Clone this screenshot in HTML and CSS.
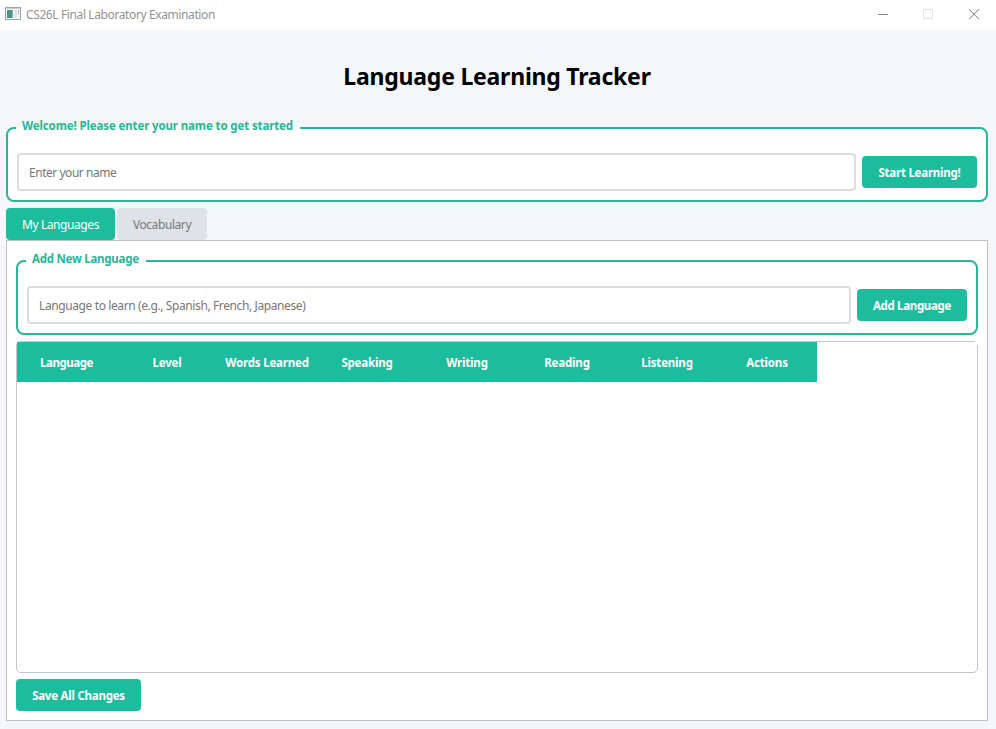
FILE: index.html
```html
<!DOCTYPE html>
<html lang="en">
<head>
<meta charset="utf-8">
<title>CS26L Final Laboratory Examination</title>
<link rel="stylesheet" href="styles.css">
</head>
<body>
<header class="titlebar">
  <svg class="app-icon" width="16" height="14" viewBox="0 0 16 14" shape-rendering="crispEdges">
    <rect x="0.5" y="0.5" width="15" height="12" fill="#f4f6f7" stroke="#9aa3a8"/>
    <rect x="1" y="1" width="14" height="1" fill="#c9d0d4"/>
    <rect x="2" y="3" width="5" height="8" fill="#4b9288"/>
    <rect x="7" y="3" width="1" height="8" fill="#8eaab5"/>
    <rect x="9" y="3" width="3" height="8" fill="#dfe4e7"/>
    <rect x="13" y="3" width="1" height="4" fill="#a8b4ba"/>
  </svg>
  <span class="window-title"><span class="t">CS26L Final Laboratory Examination</span></span>
  <div class="window-controls">
    <svg width="46" height="28" viewBox="0 0 46 28"><path d="M18 14.5h10" stroke="#8c8c8c" fill="none"/></svg>
    <svg width="46" height="28" viewBox="0 0 46 28"><rect x="17.5" y="9.5" width="9" height="9" stroke="#e4e4e4" fill="none"/></svg>
    <svg width="46" height="28" viewBox="0 0 46 28"><path d="M17 9.2l10 10M27 9.2l-10 10" stroke="#777" fill="none"/></svg>
  </div>
</header>
<main class="content">
  <h1><span class="t">Language Learning Tracker</span></h1>
  <section class="group">
    <div class="legend legend-welcome"><span class="t">Welcome! Please enter your name to get started</span></div>
    <div class="row">
      <div class="field field-name"><span class="t">Enter your name</span></div>
      <button class="btn btn-start"><span class="t">Start Learning!</span></button>
    </div>
  </section>
  <nav class="tabs">
    <div class="tab tab-languages active"><span class="t">My Languages</span></div>
    <div class="tab tab-vocabulary"><span class="t">Vocabulary</span></div>
  </nav>
  <section class="pane">
    <section class="group">
      <div class="legend legend-add"><span class="t">Add New Language</span></div>
      <div class="row">
        <div class="field"><span class="t">Language to learn (e.g., Spanish, French, Japanese)</span></div>
        <button class="btn btn-add"><span class="t">Add Language</span></button>
      </div>
    </section>
    <div class="table">
      <div class="table-head">
        <div class="tight">Language</div><div>Level</div><div>Words Learned</div><div>Speaking</div><div>Writing</div><div>Reading</div><div>Listening</div><div>Actions</div>
      </div>
    </div>
    <button class="btn btn-save"><span class="t">Save All Changes</span></button>
  </section>
</main>
</body>
</html>
```
FILE: styles.css
```css
* { box-sizing: border-box; }
body {
  margin: 0;
  width: 996px;
  height: 729px;
  overflow: hidden;
  background: #f5f6fa;
  font: 12px/16px "Noto Sans", "Open Sans", sans-serif;
  color: #000;
  display: flex;
  flex-direction: column;
}
.t { white-space: nowrap; }
.titlebar {
  height: 30px;
  flex: none;
  background: #fff;
  display: flex;
  align-items: flex-start;
  padding-left: 5px;
}
.app-icon { margin-top: 7px; }
.window-title { margin: 7px 0 0 5px; color: #929292; letter-spacing: -0.39px; }
.window-controls { display: flex; margin-left: auto; margin-right: -2px; }
.content { flex: 1; display: flex; flex-direction: column; padding: 0 8px 8px 6px; }
h1 {
  margin: 0;
  height: 97px;
  line-height: 92px;
  text-align: center;
  font-size: 23px;
  font-weight: 700;
  letter-spacing: -0.22px;
}
.group {
  position: relative;
  height: 75px;
  flex: none;
  border: 2px solid #2bb596;
  border-radius: 8px;
  background: #fff;
  padding: 24px 9px 9px;
}
.legend {
  position: absolute;
  left: 8px;
  top: -12px;
  height: 18px;
  line-height: 18px;
  padding-left: 6px;
  color: #2bb596;
  font-size: 11.5px;
  font-weight: 700;
}
.legend-welcome {
  width: 284px;
  letter-spacing: -0.13px;
  background: linear-gradient(#f5f6fa 10px, #fff 10px);
}
.legend-add { width: 120px; letter-spacing: -0.25px; background: #fff; }
.row { display: flex; align-items: center; gap: 6px; }
.field {
  flex: 1;
  height: 38px;
  border: 2px solid #dcdcdc;
  border-radius: 4px;
  background: #fff;
  padding: 0 10px;
  line-height: 35px;
  color: #777;
  letter-spacing: -0.39px;
}
.field-name { letter-spacing: -0.47px; }
.btn {
  height: 32px;
  flex: none;
  border: 0;
  border-radius: 4px;
  padding: 1px 0 0;
  background: #1dbc9c;
  color: #fff;
  font: 700 11.5px/31px "Noto Sans", "Open Sans", sans-serif;
  letter-spacing: -0.24px;
  text-align: center;
}
.btn-start { width: 115px; }
.btn-add { width: 110px; letter-spacing: -0.33px; }
.btn-save { width: 125px; margin-top: 6px; }
.tabs { display: flex; gap: 2px; margin-top: 6px; }
.tab {
  height: 32px;
  line-height: 33px;
  border-radius: 4px;
  background: #dfe3e8;
  color: #777;
  text-align: center;
  letter-spacing: -0.42px;
}
.tab.active { background: #1dbc9c; color: #fff; }
.tab-languages { width: 109px; }
.tab-vocabulary { width: 90px; }
.pane {
  height: 481px;
  border: 1px solid #c0c0c4;
  background: #fff;
  padding: 19px 9px 9px;
}
.table {
  position: relative;
  height: 332px;
  margin-top: 6px;
  border: 1px solid #c4c6c8;
  border-radius: 5px;
  background: #fff;
}
.table::after {
  content: "";
  position: absolute;
  top: 0;
  right: -1px;
  width: 3px;
  height: 3px;
  background: #fff;
}
.table-head {
  display: grid;
  grid-template-columns: repeat(8, 100px);
  width: 800px;
  height: 40px;
  line-height: 42px;
  background: #1dbc9c;
  color: #fff;
  font-size: 11.5px;
  font-weight: 700;
  text-align: center;
  letter-spacing: -0.18px;
}
.tight { letter-spacing: -0.45px; margin-left: -1px; }
```
